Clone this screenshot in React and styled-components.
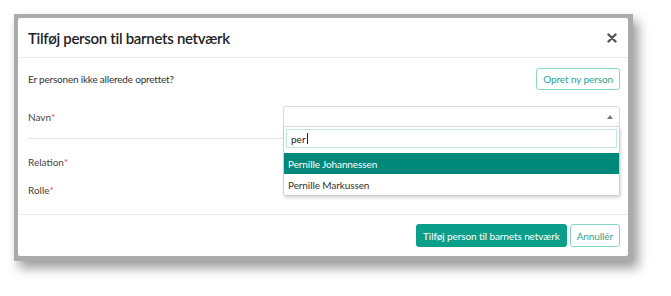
import styled, { createGlobalStyle } from "styled-components";

const GlobalStyle = createGlobalStyle`
  body {
    margin: 0;
    background: #ffffff;
    font-family: Lato, "Open Sans", "Liberation Sans", sans-serif;
  }
`;

const Page = styled.div`
  width: 671px;
  height: 296px;
  padding: 14px 0 0 14px;
  box-sizing: border-box;
`;

const Backdrop = styled.div`
  width: 619px;
  height: 247px;
  padding: 4px 5px 5px 4px;
  box-sizing: border-box;
  background: #ababab;
  box-shadow: 5px 7px 11px rgba(0, 0, 0, 0.4);
`;

const Modal = styled.div`
  width: 610px;
  height: 238px;
  background: #fff;
  border-radius: 2px;
  display: flex;
  flex-direction: column;
`;

const Header = styled.div`
  height: 39px;
  display: flex;
  align-items: center;
  justify-content: space-between;
  padding: 0 11px 0 10px;
  border-bottom: 1px solid #ececec;
`;

const Title = styled.h2`
  margin: 0;
  font-size: 15px;
  font-weight: 600;
  color: #222;
  letter-spacing: -0.3px;
`;

const Close = styled.button`
  border: none;
  background: none;
  padding: 0;
  width: 10px;
  height: 10px;
  display: flex;
  cursor: pointer;
`;

const Body = styled.div`
  flex: 1;
  padding: 10px 8px 0 10px;
  border-bottom: 1px solid #ececec;
`;

const IntroRow = styled.div`
  height: 22px;
  display: flex;
  align-items: center;
  justify-content: space-between;
  font-size: 10px;
  letter-spacing: -0.2px;
  color: #333;
`;

const OutlineBtn = styled.button`
  height: ${({ h }) => h || 22}px;
  padding: 0 6px;
  border: 1.5px solid #86d6c9;
  border-radius: 3px;
  background: #fff;
  color: #2aa493;
  font-family: inherit;
  font-size: 10px;
  letter-spacing: -0.1px;
  cursor: pointer;
`;

const FormRow = styled.div`
  display: grid;
  grid-template-columns: 255px 337px;
  align-items: center;
  height: ${({ h }) => h}px;
  ${({ divided }) => divided && "border-bottom: 1px solid #e6e6e6; align-items: start;"}
`;

const Label = styled.label`
  font-size: 10px;
  color: #444;
  margin-top: ${({ top }) => top || 0}px;
  &::after {
    content: "*";
    color: #e0405a;
  }
`;

const FieldWrap = styled.div`
  position: relative;
  margin-top: ${({ top }) => top || 0}px;
`;

const SelectBox = styled.div`
  height: 21px;
  border: 1px solid #d8d8d8;
  border-radius: 3px 3px 0 0;
  box-sizing: border-box;
  display: flex;
  align-items: center;
  justify-content: flex-end;
  padding-right: 6px;
`;

const Caret = styled.span`
  width: 0;
  height: 0;
  border-left: 3px solid transparent;
  border-right: 3px solid transparent;
  border-bottom: 4px solid #777;
`;

const Dropdown = styled.div`
  position: absolute;
  top: 21px;
  left: 0;
  width: 337px;
  background: #fff;
  border: 1px solid #cfcfcf;
  border-top: none;
  box-sizing: border-box;
  border-radius: 0 0 3px 3px;
  box-shadow: 1px 2px 3px rgba(0, 0, 0, 0.15);
  padding-top: 2px;
  z-index: 5;
`;

const Search = styled.div`
  margin: 0 2px 5px 2px;
  height: 19px;
  border: 1px solid #bfe6df;
  box-sizing: border-box;
  display: flex;
  align-items: center;
  padding-left: 4px;
  font-size: 10px;
  color: #222;
`;

const Cursor = styled.span`
  display: inline-block;
  width: 1px;
  height: 11px;
  background: #222;
  margin-left: 1px;
`;

const Option = styled.div`
  height: 21px;
  display: flex;
  align-items: center;
  padding-left: 4px;
  font-size: 10px;
  letter-spacing: -0.1px;
  background: ${({ active }) => (active ? "#00897a" : "#fff")};
  color: ${({ active }) => (active ? "#fff" : "#333")};
`;

const Footer = styled.div`
  height: 41px;
  display: flex;
  align-items: center;
  justify-content: flex-end;
  gap: 3px;
  padding: 0 8px;
`;

const PrimaryBtn = styled.button`
  height: 23px;
  padding: 0 7px;
  border: none;
  border-radius: 3px;
  background: #0b9e8a;
  color: #fff;
  font-family: inherit;
  font-size: 10px;
  letter-spacing: -0.1px;
  cursor: pointer;
`;

export default function App() {
  return (
    <>
      <GlobalStyle />
      <Page>
        <Backdrop>
          <Modal>
            <Header>
              <Title>Tilføj person til barnets netværk</Title>
              <Close aria-label="Luk">
                <svg width="10" height="10" viewBox="0 0 10 10">
                  <path d="M1.5 1.5 L8.5 8.5 M8.5 1.5 L1.5 8.5" stroke="#555" strokeWidth="2.4" strokeLinecap="round" />
                </svg>
              </Close>
            </Header>
            <Body>
              <IntroRow>
                <span>Er personen ikke allerede oprettet?</span>
                <OutlineBtn>Opret ny person</OutlineBtn>
              </IntroRow>
              <FormRow h={48} divided>
                <Label top={21}>Navn</Label>
                <FieldWrap top={16}>
                  <SelectBox>
                    <Caret />
                  </SelectBox>
                  <Dropdown>
                    <Search>
                      per<Cursor />
                    </Search>
                    <Option active>Pernille Johannessen</Option>
                    <Option>Pernille Markussen</Option>
                  </Dropdown>
                </FieldWrap>
              </FormRow>
              <FormRow h={28} style={{ marginTop: 9 }}>
                <Label>Relation</Label>
              </FormRow>
              <FormRow h={28}>
                <Label>Rolle</Label>
              </FormRow>
            </Body>
            <Footer>
              <PrimaryBtn>Tilføj person til barnets netværk</PrimaryBtn>
              <OutlineBtn h={23}>Annullér</OutlineBtn>
            </Footer>
          </Modal>
        </Backdrop>
      </Page>
    </>
  );
}
